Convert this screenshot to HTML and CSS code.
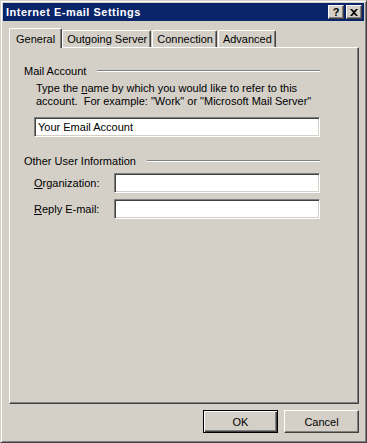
FILE: index.html
```html
<!DOCTYPE html>
<html>
<head>
  <title>Internet E-mail Settings</title>
  <link rel="stylesheet" href="styles.css">
</head>
<body>
  <div class="window">
    <div class="titlebar">
      <span class="title">Internet E-mail Settings</span>
      <div class="caption-buttons">
        <div class="cap-btn help-btn">?</div>
        <div class="cap-btn close-btn">
          <svg width="8" height="7" viewBox="0 0 8 7">
            <path d="M0 0h2l2 2 2-2h2L5 3.5 8 7H6L4 5 2 7H0l3-3.5z" fill="#000"/>
          </svg>
        </div>
      </div>
    </div>

    <div class="dialog-body">
      <div class="tabs">
        <div class="tab selected">General</div>
        <div class="tab">Outgoing Server</div>
        <div class="tab">Connection</div>
        <div class="tab">Advanced</div>
      </div>

      <div class="tab-panel">
        <div class="group-head">
          <span>Mail Account</span>
          <div class="etch"></div>
        </div>
        <p class="hint">Type the <u>n</u>ame by which you would like to refer to this<br>account.&nbsp; For example: "Work" or "Microsoft Mail Server"</p>
        <div class="textbox wide">Your Email Account</div>

        <div class="group-head second">
          <span>Other User Information</span>
          <div class="etch"></div>
        </div>
        <div class="field-row">
          <label><u>O</u>rganization:</label>
          <div class="textbox"></div>
        </div>
        <div class="field-row">
          <label><u>R</u>eply E-mail:</label>
          <div class="textbox"></div>
        </div>
      </div>

      <div class="button-row">
        <div class="push-btn default">OK</div>
        <div class="push-btn">Cancel</div>
      </div>
    </div>
  </div>
</body>
</html>
```

FILE: styles.css
```css
body {
    margin: 0;
    background: #d4d0c8;
    font-family: "Liberation Sans", Arial, sans-serif;
    font-size: 11px;
    color: #000;
}

.window {
    width: 367px;
    height: 443px;
    box-sizing: border-box;
    background: #d4d0c8;
    border: 1px solid;
    border-color: #d4d0c8 #404040 #404040 #d4d0c8;
    box-shadow: inset 1px 1px #fff, inset -1px -1px #808080;
    padding: 2px;
    display: flex;
    flex-direction: column;
}

.titlebar {
    height: 18px;
    background: #0a246a;
    display: flex;
    align-items: center;
    justify-content: space-between;
    padding: 0 2px 0 3px;
}

.title {
    color: #fff;
    font-weight: bold;
    font-size: 11px;
    letter-spacing: 0.5px;
}

.caption-buttons {
    display: flex;
    gap: 2px;
}

.cap-btn {
    width: 16px;
    height: 14px;
    box-sizing: border-box;
    background: #d4d0c8;
    border: 1px solid;
    border-color: #fff #404040 #404040 #fff;
    box-shadow: inset -1px -1px #808080;
    display: flex;
    align-items: center;
    justify-content: center;
}

.help-btn {
    font-weight: bold;
    font-size: 11px;
    line-height: 12px;
}

.dialog-body {
    flex: 1;
    display: flex;
    flex-direction: column;
    padding: 7px 5px 0 6px;
}

.tabs {
    display: flex;
    align-items: flex-end;
    height: 19px;
}

.tab {
    height: 17px;
    box-sizing: border-box;
    padding: 0 3px 0 4px;
    border: 1px solid;
    border-bottom: none;
    border-color: #fff #404040 #fff #fff;
    border-radius: 2px 2px 0 0;
    box-shadow: inset -1px 0 #808080;
    display: flex;
    align-items: center;
    margin-left: 1px;
}

.tab.selected {
    height: 20px;
    margin: 0 0 -1px 0;
    padding: 0 6px;
    background: #d4d0c8;
    position: relative;
    z-index: 1;
}

.tab.selected + .tab {
    margin-left: 0;
}

.tab-panel {
    height: 357px;
    box-sizing: border-box;
    border: 1px solid;
    border-color: #fff #404040 #404040 #fff;
    box-shadow: inset -1px -1px #808080;
    padding: 16px 38px 0 14px;
}

.group-head {
    display: flex;
    align-items: center;
    gap: 11px;
    height: 13px;
}

.group-head.second {
    margin: 17px 0 3px;
}

.etch {
    flex: 1;
    border-top: 1px solid #808080;
    border-bottom: 1px solid #fff;
}

.hint {
    margin: 5px 0 0 12px;
    line-height: 13px;
}

.textbox {
    height: 20px;
    box-sizing: border-box;
    background: #fff;
    border: 1px solid;
    border-color: #808080 #fff #fff #808080;
    box-shadow: inset 1px 1px #404040, inset -1px -1px #d4d0c8;
    padding: 2px 0 0 3px;
    line-height: 14px;
}

.textbox.wide {
    margin: 9px 0 0 10px;
}

.field-row {
    display: flex;
    align-items: center;
    margin: 6px 0 0 10px;
}

.field-row label {
    width: 80px;
}

.field-row .textbox {
    flex: 1;
}

.button-row {
    display: flex;
    justify-content: flex-end;
    gap: 6px;
    margin-top: 6px;
}

.push-btn {
    width: 75px;
    height: 23px;
    box-sizing: border-box;
    border: 1px solid;
    border-color: #fff #404040 #404040 #fff;
    box-shadow: inset -1px -1px #808080;
    display: flex;
    align-items: center;
    justify-content: center;
}

.push-btn.default {
    border-color: #000;
    box-shadow: inset 1px 1px #fff, inset -1px -1px #404040, inset -2px -2px #808080;
}
```
